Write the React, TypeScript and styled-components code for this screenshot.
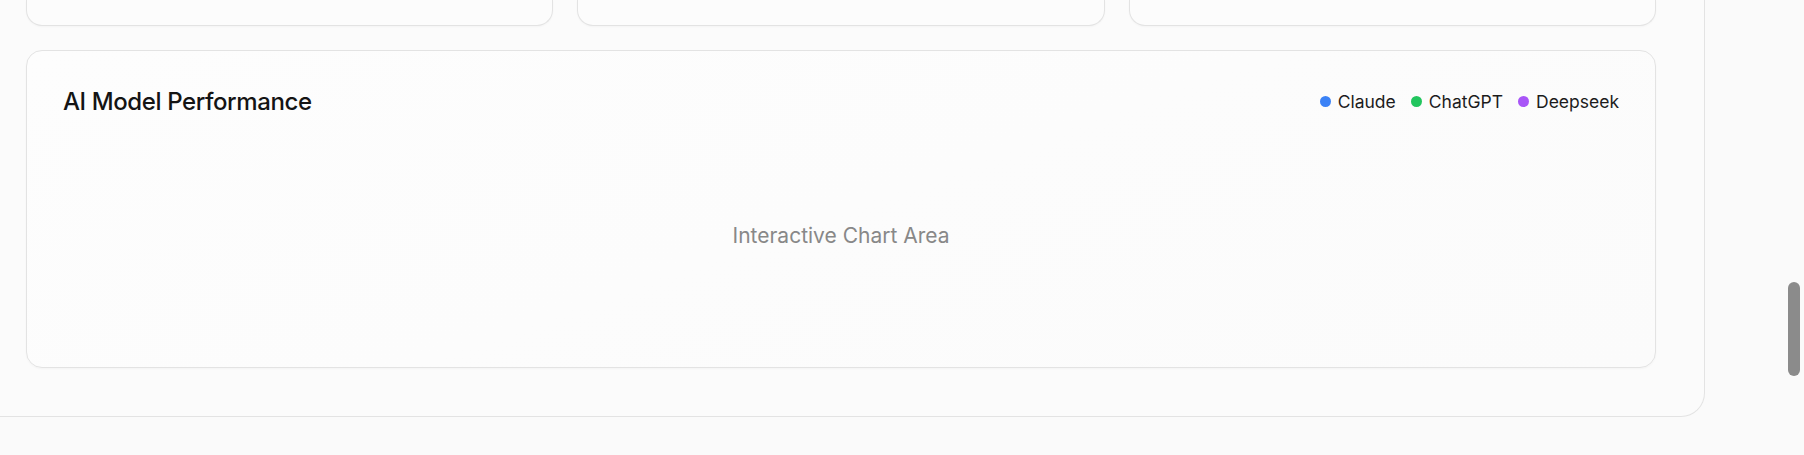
import styled, { createGlobalStyle } from 'styled-components';

const GlobalStyle = createGlobalStyle`
    html, body {
        margin: 0;
        padding: 0;
        background: #fafafa;
        font-family: Inter, "Noto Sans", sans-serif;
        overflow: hidden;
    }
`;

const Page = styled.div`
    display: flex;
    height: 455px;
    padding-right: 99px;
    box-sizing: border-box;
`;

const Panel = styled.main`
    flex: 1;
    align-self: flex-start;
    display: flex;
    flex-direction: column;
    gap: 24px;
    padding: 0 48px 48px 26px;
    background: #fbfbfb;
    border: 1px solid #e3e3e3;
    border-top: 0;
    border-left: 0;
    border-bottom-right-radius: 24px;
`;

const StatRow = styled.div`
    display: grid;
    grid-template-columns: repeat(3, 1fr);
    gap: 24px;
`;

// only the bottom edge of these cards is in view
const StatCard = styled.div`
    height: 25px;
    background: #fcfcfc;
    border: 1px solid #e3e3e3;
    border-top: 0;
    border-radius: 0 0 16px 16px;
    box-shadow: 0 1px 2px rgba(0, 0, 0, 0.03);
`;

const ChartCard = styled.section`
    padding: 36px;
    background: linear-gradient(160deg, #fdfdfd 0%, #fbfbfb 100%);
    border: 1px solid #e3e3e3;
    border-radius: 16px;
    box-shadow: 0 1px 2px rgba(0, 0, 0, 0.03);
`;

const ChartHeader = styled.div`
    display: flex;
    justify-content: space-between;
    align-items: center;
    height: 28px;
    margin-bottom: 24px;
`;

const Title = styled.h2`
    margin: 0;
    font-size: 24px;
    font-weight: 500;
    letter-spacing: -0.4px;
    color: #141414;
`;

const Legend = styled.div`
    display: flex;
    align-items: center;
    gap: 15px;
`;

const LegendItem = styled.div`
    display: flex;
    align-items: center;
    gap: 7px;
    font-size: 17.5px;
    color: #1c1c1c;
`;

const Dot = styled.span<{ $color: string }>`
    width: 11px;
    height: 11px;
    border-radius: 50%;
    background: ${(p) => p.$color};
`;

const ChartArea = styled.div`
    height: 192px;
    display: flex;
    align-items: center;
    justify-content: center;
    font-size: 21px;
    color: #888888;
`;

const ScrollThumb = styled.div`
    position: fixed;
    top: 282px;
    right: 4px;
    width: 12px;
    height: 94px;
    border-radius: 6px;
    background: #8b8b8b;
`;

const models = [
    { name: 'Claude', color: '#3b82f6' },
    { name: 'ChatGPT', color: '#22c55e' },
    { name: 'Deepseek', color: '#a855f7' },
];

export default function App() {
    return (
        <>
            <GlobalStyle />
            <Page>
                <Panel>
                    <StatRow>
                        <StatCard />
                        <StatCard />
                        <StatCard />
                    </StatRow>
                    <ChartCard>
                        <ChartHeader>
                            <Title>AI Model Performance</Title>
                            <Legend>
                                {models.map((m) => (
                                    <LegendItem key={m.name}>
                                        <Dot $color={m.color} />
                                        {m.name}
                                    </LegendItem>
                                ))}
                            </Legend>
                        </ChartHeader>
                        <ChartArea>Interactive Chart Area</ChartArea>
                    </ChartCard>
                </Panel>
            </Page>
            <ScrollThumb />
        </>
    );
}
